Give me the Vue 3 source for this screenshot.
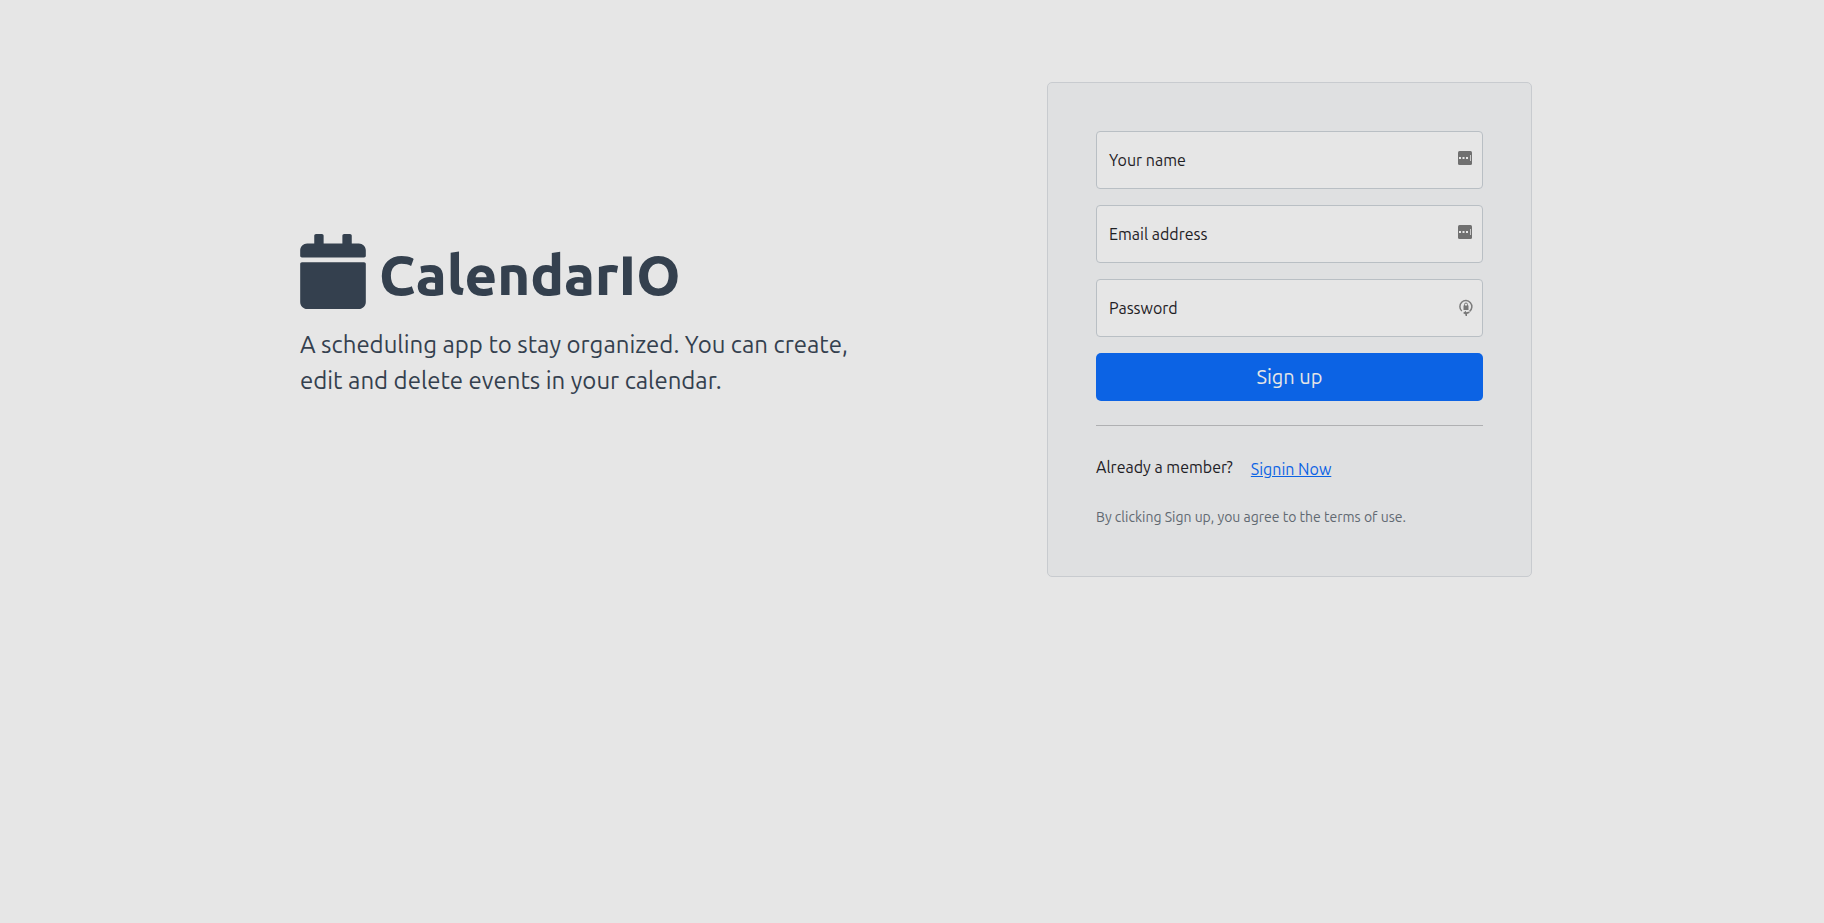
<script setup>
import { reactive } from 'vue'

const form = reactive({ name: '', email: '', password: '' })

const fields = [
  { key: 'name', label: 'Your name', type: 'text', autocomplete: 'name' },
  { key: 'email', label: 'Email address', type: 'email', autocomplete: 'email' },
  { key: 'password', label: 'Password', type: 'password', autocomplete: 'new-password' },
]
</script>

<template>
  <main class="page">
    <section class="intro">
      <h1 class="brand">
        <svg class="brand-icon" viewBox="0 0 448 512" aria-hidden="true">
          <path
            fill="currentColor"
            d="M12 192h424c6.600 0 12 5.400 12 12v260c0 26.500-21.500 48-48 48H48c-26.500 0-48-21.500-48-48V204c0-6.600 5.400-12 12-12zm436-44v-36c0-26.500-21.500-48-48-48h-48V12c0-6.600-5.400-12-12-12h-40c-6.600 0-12 5.400-12 12v52H160V12c0-6.600-5.400-12-12-12h-40c-6.600 0-12 5.400-12 12v52H48C21.500 64 0 85.500 0 112v36c0 6.600 5.400 12 12 12h424c6.600 0 12-5.400 12-12z"
          />
        </svg>
        <span>CalendarIO</span>
      </h1>
      <p class="tagline">
        A scheduling app to stay organized. You can create,
        edit and delete events in your calendar.
      </p>
    </section>

    <form class="card" @submit.prevent>
      <div v-for="field in fields" :key="field.key" class="field">
        <input
          :id="field.key"
          v-model="form[field.key]"
          class="control"
          :type="field.type"
          :autocomplete="field.autocomplete"
          placeholder=" "
        />
        <label class="label" :for="field.key">{{ field.label }}</label>
        <svg
          v-if="field.key === 'password'"
          class="hint hint-lock"
          viewBox="0 0 14 17"
          aria-hidden="true"
        >
          <path d="M2.800 12A6 6 0 1 1 10.600 12.300" fill="none" stroke="#7c7c7c" stroke-width="1.500" />
          <path d="M4.500 6.500h5v4.500h-5z" fill="#777" />
          <path d="M5.500 7V5.500a1.500 1.500 0 0 1 3 0V7" fill="none" stroke="#777" stroke-width="1" />
          <path d="M4 14 7 11.700v1.500l3.500-.800v1.500L8 15v2H6.500v-1.500z" fill="#777" />
        </svg>
        <svg v-else class="hint hint-dots" viewBox="0 0 14 14" aria-hidden="true">
          <rect width="14" height="14" rx="1.500" fill="#707070" />
          <path d="M1 6h2v2H1zM4.500 6h2v2h-2zM8 6h2v2H8z" fill="#e6e6e6" />
          <path d="M12 4h1v6h-1z" fill="#c9c9c9" />
        </svg>
      </div>

      <button class="submit" type="submit">Sign up</button>
      <hr class="divider" />
      <div class="member">
        <span>Already a member?</span>
        <a class="signin" href="#signin">Signin Now</a>
      </div>
      <small class="terms">By clicking Sign up, you agree to the terms of use.</small>
    </form>
  </main>
</template>

<style>
body {
  margin: 0;
  background: #e6e6e6;
}
</style>

<style scoped>
.page {
  box-sizing: border-box;
  display: grid;
  grid-template-columns: minmax(0, 1fr) minmax(0, 485px);
  column-gap: 80px;
  align-items: center;
  max-width: 1280px;
  margin: 0 auto;
  padding: 82px 20px 48px 28px;
  font-family: Ubuntu, "Noto Sans", sans-serif;
  font-size: 16px;
  font-weight: 400;
  line-height: 24px;
  color: #1e2125;
}

.intro {
  padding-bottom: 26px;
  color: #34404e;
}

.brand {
  display: flex;
  gap: 13px;
  margin: 0 0 18px;
  font-size: 56px;
  line-height: 68px;
  font-weight: 800;
}

.brand-icon {
  flex: none;
  width: 66px;
  height: 75px;
}

.brand span {
  padding-top: 7px;
}

.tagline {
  max-width: 560px;
  margin: 0;
  font-size: 24px;
  line-height: 36px;
}

.card {
  box-sizing: border-box;
  padding: 48px;
  border: 1px solid #c8cbcf;
  border-radius: 5px;
  background: #dfe0e1;
}

.field {
  position: relative;
  margin-bottom: 16px;
}

.control {
  box-sizing: border-box;
  display: block;
  width: 100%;
  height: 58px;
  padding: 16px 36px 16px 12px;
  border: 1px solid #b9bfc4;
  border-radius: 4px;
  background: #e6e6e6;
  color: inherit;
  font: inherit;
}

.label {
  position: absolute;
  top: 17px;
  left: 13px;
  pointer-events: none;
}

.control:not(:placeholder-shown) + .label {
  top: 2px;
  font-size: 12px;
}

.hint {
  position: absolute;
  top: 20px;
}

.hint-dots {
  right: 11px;
  width: 14px;
  height: 14px;
}

.hint-lock {
  right: 10px;
  width: 14px;
  height: 17px;
}

.submit {
  display: block;
  width: 100%;
  height: 48px;
  padding: 0;
  border: 0;
  border-radius: 5px;
  background: #0c63e4;
  color: #e6e6e6;
  font: inherit;
  font-size: 20px;
  cursor: pointer;
}

.divider {
  height: 1px;
  margin: 24px 0;
  border: 0;
  background: #afb0b2;
}

.member {
  display: flex;
  gap: 18px;
  margin-bottom: 25px;
}

.member span {
  padding-top: 5px;
}

.signin {
  padding-top: 7px;
  color: #0c63e4;
}

.terms {
  display: block;
  font-size: 14px;
  line-height: 22px;
  color: #616971;
}
</style>
